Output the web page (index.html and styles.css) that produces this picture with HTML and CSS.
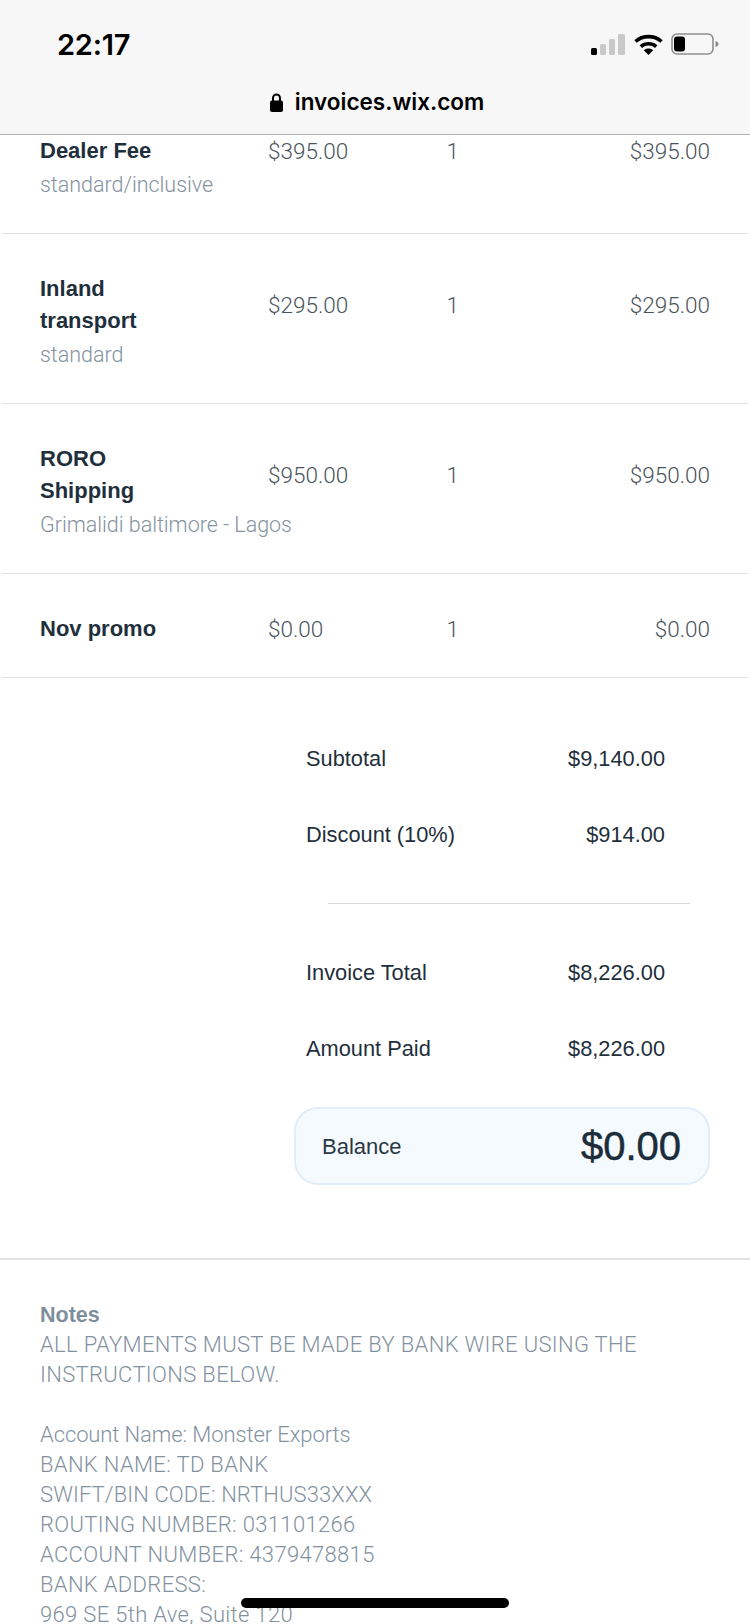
FILE: index.html
```html
<!DOCTYPE html>
<html lang="en">
<head>
<meta charset="utf-8">
<title>Invoice</title>
<link rel="stylesheet" href="styles.css">
</head>
<body>
<div class="screen">
  <header class="chrome">
    <div class="status">
      <span class="time">22:17</span>
      <div class="status-icons">
        <svg class="signal" width="34" height="21" viewBox="0 0 34 21"><rect x="0" y="14" width="6" height="7" rx="1.5" fill="#000"/><rect x="9" y="10" width="6" height="11" rx="1.5" fill="#c9c9c9"/><rect x="18" y="5" width="6" height="16" rx="1.5" fill="#c9c9c9"/><rect x="27" y="0" width="7" height="21" rx="1.5" fill="#c9c9c9"/></svg>
        <svg class="wifi" width="29" height="21" viewBox="0 0 29 21"><path d="M1.5 7.5C8.8 1 20.2 1 27.5 7.5" fill="none" stroke="#000" stroke-width="3.6"/><path d="M6.8 12.6C11.2 8.8 17.8 8.8 22.2 12.6" fill="none" stroke="#000" stroke-width="3.6"/><path d="M14.5 21L9.8 16.2C12.4 14 16.6 14 19.2 16.2Z" fill="#000"/></svg>
        <svg class="battery" width="48" height="22" viewBox="0 0 48 22"><rect x="1" y="1" width="41" height="20" rx="5" fill="none" stroke="#8e8e8e" stroke-width="1.6"/><rect x="3" y="3.500" width="11" height="15" rx="3" fill="#000"/><path d="M44.500 8C46.500 8.500 47.500 9.500 47.500 11S46.500 13.500 44.500 14Z" fill="#8e8e8e"/></svg>
      </div>
    </div>
    <div class="url">
      <svg class="lock" width="13" height="19" viewBox="0 0 13 19"><path d="M3 8V5a3.500 3.500 0 0 1 7 0v3" fill="none" stroke="#000" stroke-width="2"/><rect x="0" y="7.500" width="13" height="11.500" rx="2" fill="#000"/></svg>
      <span>invoices.wix.com</span>
    </div>
  </header>

  <main class="invoice">
    <section class="items">
      <div class="item item-first">
        <div class="name">Dealer Fee</div><div class="price">$395.00</div><div class="qty">1</div><div class="total">$395.00</div>
        <div class="desc">standard/inclusive</div>
      </div>
      <div class="item">
        <div class="name">Inland<br>transport</div><div class="price">$295.00</div><div class="qty">1</div><div class="total">$295.00</div>
        <div class="desc">standard</div>
      </div>
      <div class="item">
        <div class="name">RORO<br>Shipping</div><div class="price">$950.00</div><div class="qty">1</div><div class="total">$950.00</div>
        <div class="desc">Grimalidi baltimore - Lagos</div>
      </div>
      <div class="item item-last">
        <div class="name">Nov promo</div><div class="price">$0.00</div><div class="qty">1</div><div class="total">$0.00</div>
      </div>
    </section>

    <section class="summary">
      <div class="sum-row"><span>Subtotal</span><span>$9,140.00</span></div>
      <div class="sum-row"><span>Discount (10%)</span><span>$914.00</span></div>
      <div class="sum-divider"></div>
      <div class="sum-row"><span>Invoice Total</span><span>$8,226.00</span></div>
      <div class="sum-row"><span>Amount Paid</span><span>$8,226.00</span></div>
      <div class="balance"><span class="balance-label">Balance</span><span class="balance-value">$0.00</span></div>
    </section>

    <section class="notes">
      <h2 class="notes-title">Notes</h2>
      <p class="notes-body"><span class="caps">ALL PAYMENTS MUST BE MADE BY BANK WIRE USING THE<br>INSTRUCTIONS BELOW.</span><br><br>Account Name: Monster Exports<br><span class="caps">BANK NAME: TD BANK</span><br><span class="caps-tight">SWIFT/BIN CODE: NRTHUS33XXX</span><br><span class="caps">ROUTING NUMBER: 031101266<br>ACCOUNT NUMBER: 4379478815<br>BANK ADDRESS:<br>969 SE 5th Ave, Suite 120</span></p>
    </section>
  </main>
  <div class="home-bar"></div>
</div>
</body>
</html>
```
FILE: styles.css
```css
* { box-sizing: border-box; }
html, body { margin: 0; padding: 0; background: #fff; }
.screen { position: relative; width: 750px; height: 1624px; overflow: hidden; background: #fff; color: #1f2f3c; font-family: "Liberation Sans", Arial, sans-serif; }

.chrome { height: 135px; background: #f7f7f7; border-bottom: 1px solid #b2b2b2; display: flex; flex-direction: column; }
.status { height: 85px; padding: 33px 31px 0 57px; display: flex; justify-content: space-between; align-items: flex-start; }
.time { font-family: Inter, "Liberation Sans", sans-serif; font-size: 29px; font-weight: 600; line-height: 24px; color: #000; letter-spacing: -0.2px; }
.status-icons { display: flex; align-items: flex-end; gap: 8.500px; }
.url { display: flex; align-items: center; justify-content: center; gap: 12px; padding: 3px 0 0 4px; color: #000; font-family: Inter, "Liberation Sans", sans-serif; font-size: 22.500px; font-weight: 600; line-height: 28px; }

.items { padding: 0 2px; }
.item { display: grid; grid-template-columns: 228px 178.500px 1fr auto; align-items: center; padding: 39px 38px 31px; border-bottom: 1.500px solid #e0e2e3; }
.item-first { padding-top: 0; }
.item-last { padding: 38.500px 38px 32px; }
.name { font-size: 22px; font-weight: 700; line-height: 32px; color: #1f2f3c; }
.price, .qty, .total { font-family: Roboto, "Liberation Sans", sans-serif; font-weight: 300; font-size: 22.500px; line-height: 32px; color: #4a545c; }
.desc { grid-column: 1 / -1; font-family: Roboto, "Liberation Sans", sans-serif; font-weight: 300; font-size: 21.500px; letter-spacing: -0.03px; line-height: 34px; margin-top: 1px; color: #8492a0; }

.summary { padding: 64px 40px 0 294px; }
.sum-row { display: flex; justify-content: space-between; padding: 0 45px 0 12px; height: 76px; font-size: 21.800px; line-height: 34px; color: #1f2f3c; }
.sum-divider { height: 1px; background: #d6dadd; margin: 9.500px 20px 52px 34px; }
.balance { margin-top: -1.500px; height: 78px; display: flex; align-items: center; justify-content: space-between; padding: 0 27px 0 26px; background: #f5faff; border: 2px solid #e1edf9; border-radius: 24px; }
.balance-label { padding-top: 3px; font-size: 22px; color: #2a3843; }
.balance-value { font-size: 40px; line-height: 46px; color: #1b2d3b; -webkit-text-stroke: 0.5px #1b2d3b; }

.notes { margin-top: 73px; padding: 40px 40px 0; border-top: 2px solid #e0e2e3; }
.notes-title { margin: 0; font-size: 21.500px; font-weight: 700; line-height: 30px; color: #7f8e9c; }
.notes-body { margin: 0; font-family: Roboto, "Liberation Sans", sans-serif; font-weight: 300; font-size: 22px; letter-spacing: -0.1px; line-height: 30px; color: #8492a0; }
.caps { letter-spacing: 0.33px; }
.caps-tight { letter-spacing: 0.1px; }

.home-bar { position: absolute; left: 241px; top: 1598px; width: 268px; height: 10px; border-radius: 5px; background: #000; }
```
